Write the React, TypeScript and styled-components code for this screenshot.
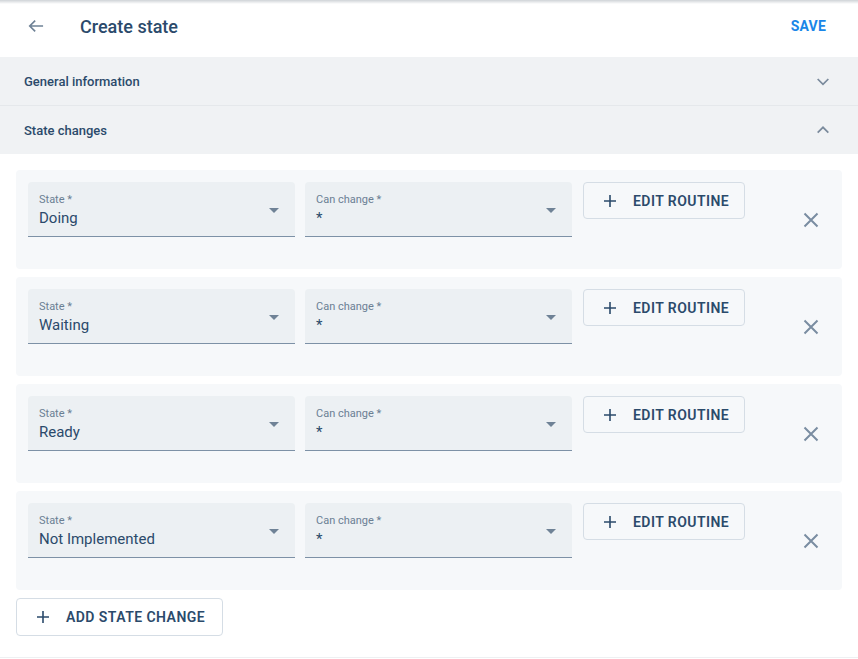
import React from "react";
import styled, { createGlobalStyle } from "styled-components";

const GlobalStyle = createGlobalStyle`
  body {
    margin: 0;
    font-family: Roboto, "Liberation Sans", sans-serif;
    background: #ffffff;
    color: #2b4a6b;
  }
`;

const Page = styled.div`
  width: 858px;
  min-height: 659px;
  display: flex;
  flex-direction: column;
  position: relative;
  &::before {
    content: "";
    position: absolute;
    left: 0;
    right: 0;
    top: 0;
    height: 4px;
    background: linear-gradient(#cfd3d7, rgba(255, 255, 255, 0));
  }
`;

const Header = styled.header`
  height: 57px;
  display: flex;
  align-items: center;
  padding: 0 32px 5px 26px;
  box-sizing: border-box;
`;

const IconButton = styled.button`
  border: 0;
  background: none;
  padding: 0;
  display: flex;
  align-items: center;
  justify-content: center;
  color: #6f8296;
  cursor: pointer;
`;

const Title = styled.h1`
  margin: 0 0 0 34px;
  font-size: 18px;
  font-weight: 500;
  color: #2b4a6b;
  flex: 1;
`;

const SaveButton = styled.button`
  border: 0;
  background: none;
  padding: 0;
  font-family: inherit;
  font-size: 14px;
  font-weight: 700;
  color: #1a86e8;
  letter-spacing: 0.2px;
  cursor: pointer;
`;

const AccordionRow = styled.div<{ $divider?: boolean }>`
  height: 48px;
  display: flex;
  align-items: center;
  justify-content: space-between;
  padding: 0 27px 0 24px;
  background: #f0f2f4;
  border-top: ${(p) => (p.$divider ? "1px solid #e5e8eb" : "0")};
  box-sizing: content-box;
  font-size: 13px;
  font-weight: 500;
  color: #2b4a6b;
`;

const Content = styled.section`
  padding: 16px 16px 21px;
  display: flex;
  flex-direction: column;
  gap: 8px;
  border-bottom: 1px solid #eef0f2;
`;

const Card = styled.div`
  background: #f6f8fa;
  border-radius: 4px;
  padding: 12px 12px 32px;
  display: flex;
  align-items: flex-start;
`;

const Field = styled.div`
  width: 267px;
  height: 55px;
  box-sizing: border-box;
  background: #ecf0f3;
  border-radius: 4px 4px 0 0;
  border-bottom: 1px solid #7d91a6;
  padding: 12px 16px 0 11px;
  display: flex;
  align-items: center;
  margin-right: 10px;
`;

const FieldText = styled.div`
  flex: 1;
  display: flex;
  flex-direction: column;
`;

const Label = styled.span`
  font-size: 11px;
  color: #6b7f93;
  line-height: 14px;
  margin-top: -9px;
`;

const Value = styled.span`
  font-size: 15px;
  color: #2b4a6b;
  line-height: 20px;
  margin-top: 1px;
`;

const Caret = styled.span`
  width: 0;
  height: 0;
  border-left: 5px solid transparent;
  border-right: 5px solid transparent;
  border-top: 5px solid #6f8296;
  margin-top: -10px;
`;

const OutlineButton = styled.button<{ $bg?: string; $width: number; $height: number }>`
  width: ${(p) => p.$width}px;
  height: ${(p) => p.$height}px;
  box-sizing: border-box;
  border: 1px solid #d5dde5;
  border-radius: 4px;
  background: ${(p) => p.$bg || "transparent"};
  display: flex;
  align-items: center;
  padding: 0 0 0 19px;
  gap: 16px;
  font-family: inherit;
  font-size: 14px;
  font-weight: 600;
  color: #2b4a6b;
  letter-spacing: 0.45px;
  cursor: pointer;
`;

const CloseButton = styled(IconButton)`
  margin: 30px 0 0 58px;
  color: #7a8da1;
`;

const Spacer = styled.span`
  width: 1px;
`;

const AddRow = styled.div`
  display: flex;
`;

const ArrowLeft = () => (
  <svg width="20" height="20" viewBox="0 0 24 24" fill="none" stroke="currentColor" strokeWidth="2">
    <path d="M20.5 12H4.5M11 5.5L4.5 12 11 18.5" />
  </svg>
);

const Chevron = ({ up }: { up?: boolean }) => (
  <svg width="16" height="16" viewBox="0 0 24 24" fill="none" stroke="#7a8a9c" strokeWidth="2.6">
    <path d={up ? "M4 16l8-8 8 8" : "M4 9l8 8 8-8"} />
  </svg>
);

const Plus = () => (
  <svg width="14" height="14" viewBox="0 0 14 14" fill="none" stroke="currentColor" strokeWidth="1.6">
    <path d="M7 1v12M1 7h12" />
  </svg>
);

const Close = () => (
  <svg width="16" height="16" viewBox="0 0 16 16" fill="none" stroke="currentColor" strokeWidth="2">
    <path d="M1.5 1.5l13 13M14.5 1.5l-13 13" />
  </svg>
);

const changes = ["Doing", "Waiting", "Ready", "Not Implemented"];

export default function App() {
  return (
    <Page>
      <GlobalStyle />
      <Header>
        <IconButton aria-label="back">
          <ArrowLeft />
        </IconButton>
        <Title>Create state</Title>
        <SaveButton>SAVE</SaveButton>
      </Header>
      <AccordionRow>
        General information
        <Chevron />
      </AccordionRow>
      <AccordionRow $divider>
        State changes
        <Chevron up />
      </AccordionRow>
      <Content>
        {changes.map((s) => (
          <Card key={s}>
            <Field>
              <FieldText>
                <Label>State *</Label>
                <Value>{s}</Value>
              </FieldText>
              <Caret />
            </Field>
            <Field>
              <FieldText>
                <Label>Can change *</Label>
                <Value>*</Value>
              </FieldText>
              <Caret />
            </Field>
            <Spacer />
            <OutlineButton $width={162} $height={37}>
              <Plus />
              EDIT ROUTINE
            </OutlineButton>
            <CloseButton aria-label="remove">
              <Close />
            </CloseButton>
          </Card>
        ))}
        <AddRow>
          <OutlineButton $width={207} $height={38} $bg="#ffffff">
            <Plus />
            ADD STATE CHANGE
          </OutlineButton>
        </AddRow>
      </Content>
    </Page>
  );
}
